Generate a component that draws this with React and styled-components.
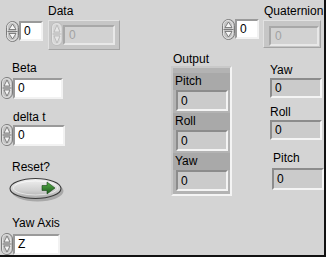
import React from 'react';
import styled, { createGlobalStyle } from 'styled-components';

const GlobalStyle = createGlobalStyle`
  html, body {
    margin: 0;
    padding: 0;
    background: #d4d4d4;
  }
  body {
    font-family: "Liberation Sans", Arial, sans-serif;
  }
`;

const Panel = styled.div`
  width: 324px;
  height: 255px;
  background: #d4d4d4;
  border-right: 2px solid #111;
  border-bottom: 2px solid #111;
  display: flex;
  flex-direction: column;
  overflow: hidden;
  font-family: "Liberation Sans", Arial, sans-serif;
  font-size: 12px;
  color: #000;
`;

const TopRow = styled.div`
  display: flex;
  align-items: flex-start;
  box-sizing: border-box;
  height: 50px;
  padding-top: 4px;
`;

const BottomRow = styled.div`
  display: grid;
  grid-template-columns: 171px 99px 54px;
  flex: 1;
`;

const Column = styled.div`
  display: flex;
  flex-direction: column;
  align-items: flex-start;
`;

const Group = styled.div`
  display: flex;
  align-items: flex-start;
  margin-left: ${p => p.$left || 0}px;
  margin-top: ${p => p.$top || 0}px;
`;

const Field = styled.div`
  display: flex;
  flex-direction: column;
  align-items: flex-start;
  margin-left: ${p => p.$left || 0}px;
  margin-top: ${p => p.$top || 0}px;
`;

const Label = styled.div`
  line-height: ${p => p.$lh || 14}px;
  height: ${p => p.$lh || 14}px;
  padding-left: ${p => p.$indent || 0}px;
  margin-top: ${p => p.$top || 0}px;
  white-space: nowrap;
`;

const Numeric = styled.div`
  display: flex;
  align-items: center;
  height: 22px;
  margin-top: ${p => p.$gap || 0}px;
  margin-left: ${p => p.$left || 0}px;
`;

const ValueBox = styled.div`
  box-sizing: border-box;
  width: ${p => p.$w}px;
  height: ${p => p.$h || 21}px;
  display: flex;
  align-items: center;
  padding-left: 3px;
  background: #fff;
  border: 2px solid;
  border-color: #9a9a9a #f2f2f2 #f2f2f2 #9a9a9a;
  font-size: 12px;
`;

const Indicator = styled.div`
  box-sizing: border-box;
  width: ${p => p.$w || 52}px;
  height: ${p => p.$h || 20}px;
  display: flex;
  align-items: center;
  padding-left: 3px;
  margin-top: ${p => p.$top || 0}px;
  margin-left: ${p => p.$left || 0}px;
  background: #cbcbcb;
  border: 2px solid;
  border-color: #8c8c8c #f4f4f4 #f4f4f4 #8c8c8c;
  font-size: 12px;
`;

const ArrayFrame = styled.div`
  box-sizing: border-box;
  width: ${p => p.$w}px;
  height: ${p => p.$h}px;
  margin-top: 2px;
  display: flex;
  align-items: flex-start;
  padding: ${p => p.$pad};
  background: #c6c6c6;
  border: 1px solid;
  border-color: #e2e2e2 #a4a4a4 #a4a4a4 #e2e2e2;
`;

const GreyBox = styled.div`
  box-sizing: border-box;
  flex: 1;
  height: 20px;
  margin-top: ${p => p.$top || 0}px;
  display: flex;
  align-items: center;
  padding-left: 4px;
  background: #d2d2d2;
  border: 2px solid;
  border-color: #a8a8a8 #e8e8e8 #e8e8e8 #a8a8a8;
  color: #a2a2a2;
  font-size: 12px;
`;

const Cluster = styled.div`
  box-sizing: border-box;
  width: 61px;
  height: 130px;
  display: flex;
  flex-direction: column;
  gap: 2px;
  padding: 5px 0 3px 0;
  background: #b3b3b3;
  border: 2px solid;
  border-color: #c9c9c9 #f4f4f4 #f4f4f4 #c9c9c9;
`;

const ClusterItem = styled.div`
  display: flex;
  flex-direction: column;
`;

const ClusterLabel = styled.div`
  height: 17px;
  line-height: 17px;
  padding-left: 2px;
  background: #a9a9a9;
`;

const ToggleWrap = styled.div`
  margin-top: 3px;
  margin-left: 9px;
  line-height: 0;
`;

function Incrementer({ disabled, width = 12, height = 22 }) {
  const fill = disabled ? '#d6d6d6' : '#c4c4c4';
  const edge = disabled ? '#bababa' : '#7c7c7c';
  const arrow = disabled ? '#e6e6e6' : '#f6f6f6';
  const arrowEdge = disabled ? '#b4b4b4' : '#6a6a6a';
  const w = width;
  const h = height;
  const mid = h / 2;
  return (
    <svg width={w} height={h} viewBox={`0 0 ${w} ${h}`}>
      <rect x="0.5" y="0.5" width={w - 1} height={h - 1} rx={(w - 1) / 2} fill={fill} stroke={edge} />
      <rect x="1.5" y="1.5" width={w - 4} height={h - 3} rx={(w - 4) / 2} fill="none" stroke={disabled ? '#e4e4e4' : '#e2e2e2'} />
      <line x1="1.5" y1={mid} x2={w - 1.5} y2={mid} stroke={edge} />
      <polygon points={`${w / 2},${3} ${w - 3},${mid - 2} 3,${mid - 2}`} fill={arrow} stroke={arrowEdge} strokeWidth="0.8" />
      <polygon points={`3,${mid + 2} ${w - 3},${mid + 2} ${w / 2},${h - 3}`} fill={arrow} stroke={arrowEdge} strokeWidth="0.8" />
    </svg>
  );
}

function ResetToggle() {
  return (
    <svg width="57" height="26" viewBox="0 0 57 26">
      <defs>
        <linearGradient id="tgBody" x1="0" y1="0" x2="0" y2="1">
          <stop offset="0" stopColor="#f2f2f2" />
          <stop offset="0.6" stopColor="#d0d0d0" />
          <stop offset="1" stopColor="#a8a8a8" />
        </linearGradient>
        <linearGradient id="tgArrow" x1="0" y1="0" x2="0" y2="1">
          <stop offset="0" stopColor="#58b048" />
          <stop offset="1" stopColor="#1c5a1c" />
        </linearGradient>
      </defs>
      <ellipse cx="28.5" cy="14" rx="26" ry="10.5" fill="#9c9c9c" opacity="0.8" />
      <ellipse cx="26.5" cy="11.5" rx="25.5" ry="10" fill="url(#tgBody)" stroke="#3c3c3c" strokeWidth="1.1" />
      <ellipse cx="26.5" cy="11" rx="22" ry="7" fill="none" stroke="#ffffff" strokeWidth="0.8" opacity="0.7" />
      <polygon points="33,8.5 38,8.5 38,5 46,11 38,17 38,13.5 33,13.5" fill="url(#tgArrow)" stroke="#184418" strokeWidth="0.6" />
    </svg>
  );
}

function Control({ boxWidth, boxHeight, value, gap, left }) {
  return (
    <Numeric $gap={gap} $left={left}>
      <Incrementer />
      <ValueBox $w={boxWidth} $h={boxHeight}>{value}</ValueBox>
    </Numeric>
  );
}

const outputs = ['Pitch', 'Roll', 'Yaw'];

export default function App() {
  return (
    <>
      <GlobalStyle />
      <Panel>
        <TopRow>
          <Group $left={6} $top={17}>
            <Incrementer width={13} height={21} />
            <ValueBox $w={24} $h={20}>0</ValueBox>
          </Group>
          <Field $left={5}>
            <Label>Data</Label>
            <ArrayFrame $w={72} $h={30} $pad="1px 4px 2px 2px">
              <Incrementer disabled width={12} height={24} />
              <GreyBox $top={3}>0</GreyBox>
            </ArrayFrame>
          </Field>
          <Group $left={102} $top={15}>
            <Incrementer width={13} height={21} />
            <ValueBox $w={24} $h={20}>0</ValueBox>
          </Group>
          <Field $left={4}>
            <Label $indent={1}>Quaternion</Label>
            <ArrayFrame $w={58} $h={28} $pad="5px 1px 1px 5px">
              <GreyBox>0</GreyBox>
            </ArrayFrame>
          </Field>
        </TopRow>

        <BottomRow>
          <Column>
            <Field $top={11}>
              <Label $indent={12}>Beta</Label>
              <Control boxWidth={50} value="0" gap={2} left={1} />
            </Field>
            <Field $top={11}>
              <Label $indent={13}>delta t</Label>
              <Control boxWidth={52} value="0" left={1} />
            </Field>
            <Field $top={14}>
              <Label $indent={12}>Reset?</Label>
              <ToggleWrap>
                <ResetToggle />
              </ToggleWrap>
            </Field>
            <Field $top={13}>
              <Label $indent={12}>Yaw Axis</Label>
              <Control boxWidth={47} value="Z" gap={3} left={1} />
            </Field>
          </Column>

          <Column>
            <Label $top={3} $lh={13} $indent={2}>Output</Label>
            <Cluster>
              {outputs.map(name => (
                <ClusterItem key={name}>
                  <ClusterLabel>{name}</ClusterLabel>
                  <Indicator $w={52} $h={21} $left={3}>0</Indicator>
                </ClusterItem>
              ))}
            </Cluster>
          </Column>

          <Column>
            <Label $top={13}>Yaw</Label>
            <Indicator $top={1}>0</Indicator>
            <Label $top={7}>Roll</Label>
            <Indicator $top={1}>0</Indicator>
            <Label $top={11} $indent={3}>Pitch</Label>
            <Indicator $top={3} $left={2} $w={52} $h={22}>0</Indicator>
          </Column>
        </BottomRow>
      </Panel>
    </>
  );
}
